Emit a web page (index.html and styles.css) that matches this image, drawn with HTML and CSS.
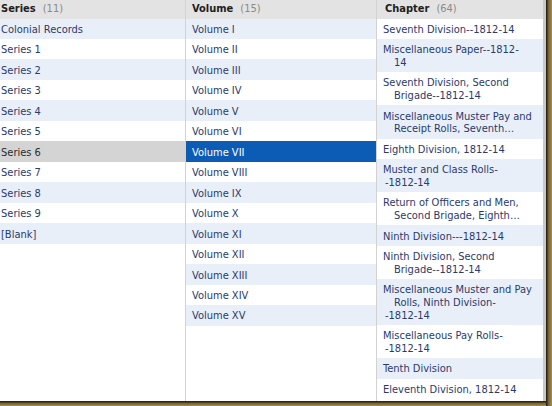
FILE: index.html
```html
<!DOCTYPE html>
<html>
<head>
<meta charset="utf-8">
<link rel="stylesheet" href="styles.css">
</head>
<body>
<div class="shot">
  <div class="screen">
    <section class="col col-series">
      <div class="head"><b>Series</b><span class="count">(11)</span></div>
      <div class="list odd-striped">
        <div class="row">Colonial Records</div>
        <div class="row">Series 1</div>
        <div class="row">Series 2</div>
        <div class="row">Series 3</div>
        <div class="row">Series 4</div>
        <div class="row">Series 5</div>
        <div class="row sel-gray">Series 6</div>
        <div class="row">Series 7</div>
        <div class="row">Series 8</div>
        <div class="row">Series 9</div>
        <div class="row">[Blank]</div>
      </div>
    </section>
    <section class="col col-volume">
      <div class="head"><b>Volume</b><span class="count">(15)</span></div>
      <div class="list odd-striped">
        <div class="row">Volume I</div>
        <div class="row">Volume II</div>
        <div class="row">Volume III</div>
        <div class="row">Volume IV</div>
        <div class="row">Volume V</div>
        <div class="row">Volume VI</div>
        <div class="row sel-blue">Volume VII</div>
        <div class="row">Volume VIII</div>
        <div class="row">Volume IX</div>
        <div class="row">Volume X</div>
        <div class="row">Volume XI</div>
        <div class="row">Volume XII</div>
        <div class="row">Volume XIII</div>
        <div class="row">Volume XIV</div>
        <div class="row">Volume XV</div>
      </div>
    </section>
    <section class="col col-chapter">
      <div class="head"><b>Chapter</b><span class="count">(64)</span></div>
      <div class="list even-striped">
        <div class="row">Seventh Division--1812-14</div>
        <div class="row">Miscellaneous Paper--1812-<span class="wrap">14</span></div>
        <div class="row">Seventh Division, Second <span class="wrap">Brigade--1812-14</span></div>
        <div class="row">Miscellaneous Muster Pay and <span class="wrap">Receipt Rolls, Seventh…</span></div>
        <div class="row">Eighth Division, 1812-14</div>
        <div class="row">Muster and Class Rolls-<span class="wrap dash">-1812-14</span></div>
        <div class="row">Return of Officers and Men, <span class="wrap">Second Brigade, Eighth…</span></div>
        <div class="row">Ninth Division---1812-14</div>
        <div class="row">Ninth Division, Second <span class="wrap">Brigade--1812-14</span></div>
        <div class="row">Miscellaneous Muster and Pay <span class="wrap">Rolls, Ninth Division-</span><span class="wrap dash">-1812-14</span></div>
        <div class="row">Miscellaneous Pay Rolls-<span class="wrap dash">-1812-14</span></div>
        <div class="row">Tenth Division</div>
        <div class="row">Eleventh Division, 1812-14</div>
      </div>
    </section>
  </div>
</div>
</body>
</html>
```

FILE: styles.css
```css
* { box-sizing: border-box; }

html, body {
  margin: 0;
  padding: 0;
  background: #ffffff;
}

.shot {
  width: 552px;
  height: 406px;
  padding: 0 6px 5px 0;
  background:
    linear-gradient(to right, #2c2516 0px, #2c2516 1px, #6f5d31 2px, #a68d4e 6px) right top / 6px 100% no-repeat,
    linear-gradient(to bottom, #2c2516 0px, #2c2516 1px, #6f5d31 2px, #a68d4e 5px) left bottom / 100% 5px no-repeat,
    #a68d4e;
}

.screen {
  width: 546px;
  height: 401px;
  display: grid;
  grid-template-columns: 186px 191px 1fr;
  background: #ffffff;
  overflow: hidden;
  font-family: "DejaVu Sans Condensed", "DejaVu Sans", sans-serif;
  font-stretch: condensed;
  font-size: 11px;
  color: #2b3a6b;
}

.col {
  display: flex;
  flex-direction: column;
  border-right: 1px solid #d2d2d2;
  overflow: hidden;
  min-width: 0;
}

.col-chapter {
  border-right: 3px solid #c9c9c9;
}

.head {
  height: 18.5px;
  flex: none;
  background: #e3e3e3;
  color: #1e1e1e;
  line-height: 12.6px;
  padding: 3px 6px 0;
  white-space: nowrap;
}

.head b {
  font-weight: bold;
}

.count {
  color: #8a8a8a;
  margin-left: 7px;
}

.col-series .head,
.col-series .row {
  padding-left: 1px;
}

.col-chapter .head {
  padding-left: 8px;
}

.list {
  display: flex;
  flex-direction: column;
}

.row {
  flex: none;
  padding: 5.2px 6px 2.6px;
  line-height: 12.7px;
  white-space: nowrap;
  background: #ffffff;
}

.odd-striped .row:nth-child(odd),
.even-striped .row:nth-child(even) {
  background: #e9eff8;
}

.wrap {
  display: block;
  padding-left: 11px;
}

.wrap.dash {
  padding-left: 2px;
}

.odd-striped .row.sel-gray {
  background: #d4d4d4;
  color: #2a2a2a;
}

.odd-striped .row.sel-blue {
  background: #0c5bb4;
  color: #ffffff;
}
```
